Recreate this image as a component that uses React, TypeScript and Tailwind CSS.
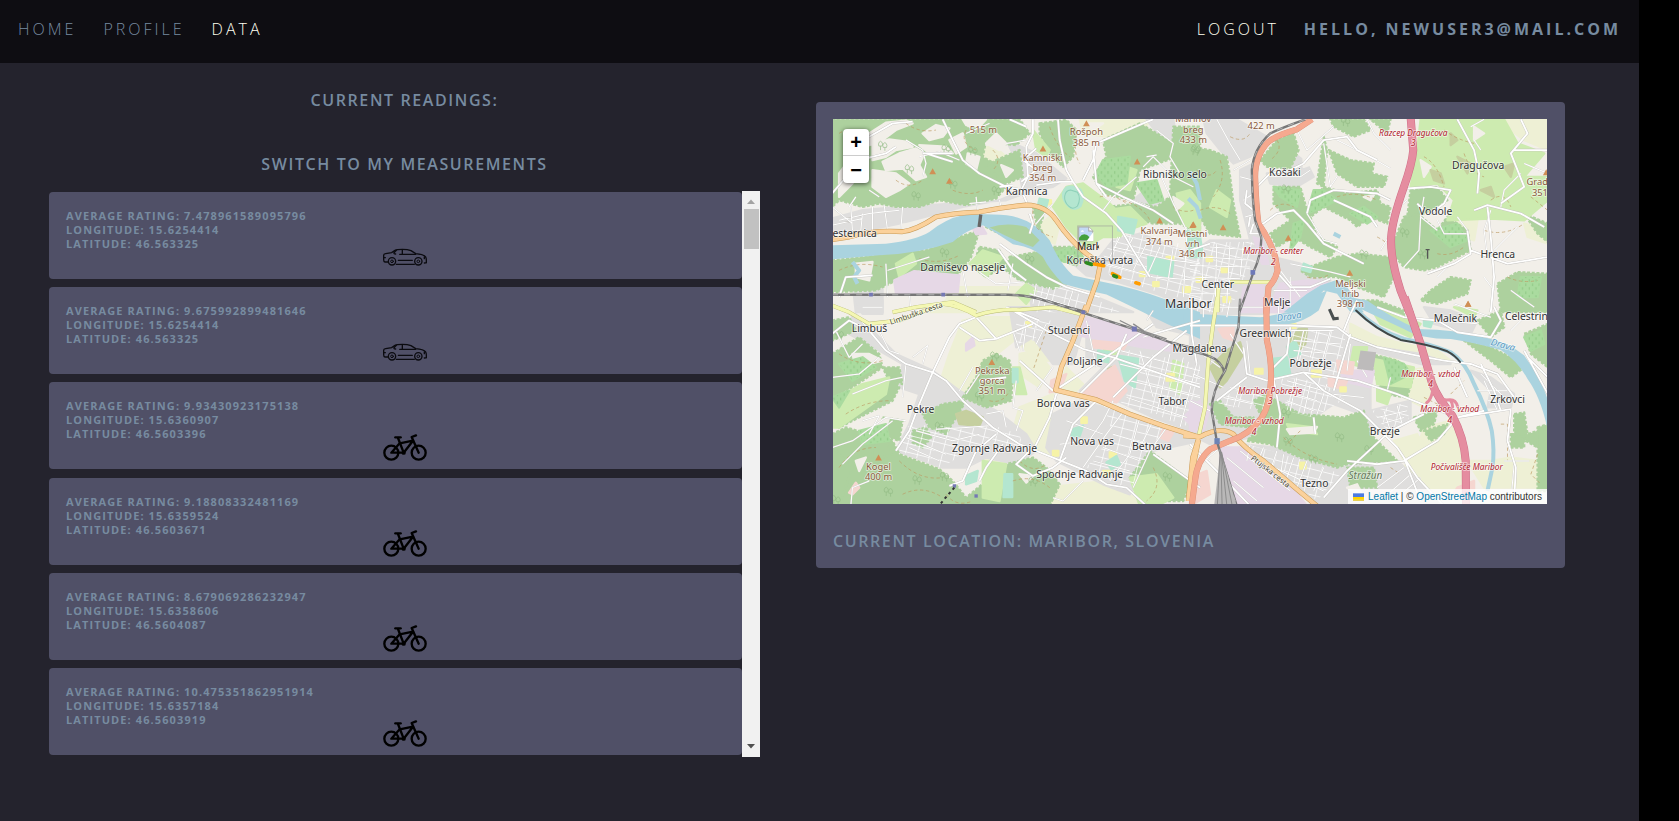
import React from "react";

type Vehicle = "car" | "bike";

interface Reading {
  rating: string;
  longitude: string;
  latitude: string;
  vehicle: Vehicle;
}

const readings: Reading[] = [
  { rating: "7.478961589095796", longitude: "15.6254414", latitude: "46.563325", vehicle: "car" },
  { rating: "9.675992899481646", longitude: "15.6254414", latitude: "46.563325", vehicle: "car" },
  { rating: "9.93430923175138", longitude: "15.6360907", latitude: "46.5603396", vehicle: "bike" },
  { rating: "9.18808332481169", longitude: "15.6359524", latitude: "46.5603671", vehicle: "bike" },
  { rating: "8.679069286232947", longitude: "15.6358606", latitude: "46.5604087", vehicle: "bike" },
  { rating: "10.475351862951914", longitude: "15.6357184", latitude: "46.5603919", vehicle: "bike" },
];

function CarIcon() {
  return (
    <svg viewBox="0 0 132 81" className="h-[27px] w-11" fill="none" stroke="#0b0b10" strokeWidth="4" strokeLinecap="round" role="img" aria-label="Car">
      <g transform="translate(0 -12)">
        <path d="M14 66 H6 Q2 65 2 59 V46 Q2 42 8 41 L26 38 L36 31 Q42 28 58 28 Q74 28 84 32 L98 41 Q122 43 128 51 Q130 55 130 60 V68 L124 69" />
        <path d="M40 73 H94" />
        <path d="M46 61 H88" />
        <path d="M50 43 H98" />
        <path d="M58 29 V42 M40 31 L33 38 Q32 42 38 42" />
        <path d="M2 53 H7 M124 51 V56" />
        <circle cx="27" cy="64" r="11" />
        <circle cx="27" cy="64" r="4" strokeWidth="3" />
        <circle cx="106" cy="64" r="11" />
        <circle cx="106" cy="64" r="4" strokeWidth="3" />
      </g>
    </svg>
  );
}

function BikeIcon() {
  return (
    <svg viewBox="0 0 132 81" className="h-[27px] w-11" fill="none" stroke="#000" strokeWidth="7" strokeLinecap="round" strokeLinejoin="round" role="img" aria-label="Bicycle">
      <circle cx="25" cy="56" r="21" />
      <circle cx="107" cy="56" r="21" />
      <path d="M25 56 L50 28 L90 20 L62 56 Z" />
      <path d="M45 12 L62 56" />
      <path d="M37 10 H53" />
      <path d="M99 4 L86 9 L107 56" />
      <circle cx="62" cy="56" r="3" />
    </svg>
  );
}

interface Label {
  t: string;
  x: number;
  y: number;
  kind: "place" | "city" | "peak" | "exit" | "water" | "road" | "wood";
  r?: number;
  a?: "start" | "end";
}

interface Tile {
  dx: number;
  dy: number;
  farm?: string;
  town?: string;
  townSlant?: string;
  industry?: string;
  retail?: string;
  forest?: string;
  clearing?: string;
  orchard?: string;
  scrub?: string;
  school?: string;
  grass?: string;
  pitch?: string;
  contours?: string;
  waterArea?: string;
  waterLine?: string;
  river?: string;
  island?: string;
  lanes?: string;
  streets?: string;
  secondary?: string;
  primary?: string;
  trunk?: string;
  motorway?: string;
  rail?: string;
  trees: [number, number][];
  peaks: [number, number][];
  labels: Label[];
}

const tiles: Tile[] = [
  {
    dx: -39,
    dy: -87,
    farm: "M480 180 L520 165 L560 200 L560 250 L510 240Z M690 380 L720 400 L705 460 L670 440 L665 400Z M780 88 H1000 L960 120 L860 140 L790 130Z M400 590 H640 L650 665 H330 L380 630Z",
    town: "M180 360 L330 345 L480 335 L560 330 L640 300 L700 290 L740 265 L650 190 L560 150 L590 210 L610 300 L540 330 L430 350 L260 395 L39 420 V400Z M39 385 L130 360 L240 350 L240 400 L140 420 L39 430Z M940 330 L1000 280 L1030 330 L1000 350Z M840 500 L880 450 L960 430 L1060 470 L1140 500 V665 L1010 610 L880 570 L800 555 L760 520Z M620 570 L720 580 L830 620 L940 665 H640Z M100 575 L190 575 L190 665 H110Z M980 88 H1060 L1070 150 L1020 140Z",
    townSlant: "M850 490 L890 440 L960 425 L1080 460 L1140 480 V640 L1000 600 L870 560Z M640 590 L720 590 L860 640 L900 665 H650Z M900 420 L960 430 L930 470Z",
    industry: "M225 570 L285 542 L420 555 L415 605 L230 608Z M455 405 L485 405 L500 430 L470 432Z",
    school: "M1040 500 h20 v12 h-20Z M1000 575 h16 v12 h-16Z M1090 590 h20 v14 h-20Z M960 545 h14 v12 h-14Z M680 330 h14 v12 h-14Z",
    forest: "M39 88 H430 L450 120 L500 150 L490 200 L540 230 L560 290 L530 325 L440 345 L360 330 L300 350 L230 350 L180 340 L130 350 L60 330 L39 350Z M440 88 H600 L630 130 L590 165 L530 160 L480 140Z M530 210 L600 180 L610 260 L560 280 L500 230Z M660 100 L740 90 L770 120 L760 200 L730 230 L690 190 L660 130Z M850 150 L960 100 L1060 160 L1070 200 L960 240 L940 330 L850 310 L820 260 L860 200Z M1060 110 H1140 V430 L1080 400 L1000 400 L900 370 L860 350 L960 340 L1010 350 L1050 320Z M640 350 L680 350 L660 410 L690 470 L760 470 L790 490 L770 525 L720 510 L660 440Z M39 510 L130 500 L230 485 L320 480 L420 440 L480 420 L455 500 L410 560 L340 545 L290 540 L230 570 L170 600 L39 605Z M500 410 L540 390 L600 395 L640 440 L620 465 L560 440Z M570 500 L680 480 L700 530 L740 580 L700 595 L600 570 L560 540Z M480 470 L540 480 L560 520 L500 560 L460 530Z",
    clearing: "M150 130 L200 98 L260 92 L280 100 L230 120 L190 150 L150 165Z M160 165 L210 148 L260 155 L280 170 L230 180 L200 200 L160 210Z M190 215 L240 190 L290 175 L315 190 L300 225 L320 260 L290 270 L250 235 L200 240Z M160 240 L230 250 L270 280 L240 300 L200 320 L160 290Z M310 130 L350 105 L390 115 L370 140 L330 150Z M60 250 L90 210 L130 230 L100 280 L60 320Z M300 165 L380 170 L400 190 L330 190Z M390 150 L430 130 L440 170 L410 190Z M445 190 L480 200 L470 240 L440 220Z M430 88 L500 88 L480 110 L440 105Z M500 160 L530 130 L560 160 L540 180Z M545 225 L580 240 L560 260Z M590 430 L625 420 L620 450Z M800 100 L850 100 L820 120Z M110 520 L160 515 L150 570 L110 560Z M1060 320 L1090 340 L1070 360Z",
    orchard: "M850 210 L930 200 L920 280 L860 290 L830 250Z M700 490 L750 470 L790 500 L760 520 L720 510Z M950 280 L1010 270 L1030 330 L990 340Z",
    grass: "M740 290 L790 280 L870 340 L930 400 L900 440 L850 440 L800 470 L740 410 L700 350Z M860 360 L930 350 L980 400 L920 420Z M450 520 L490 480 L550 500 L500 560Z M640 120 L690 180 L680 200 L650 180Z M590 610 L620 580 L650 600 L620 640Z M230 520 L280 490 L290 520 L240 560Z M890 220 L950 240 L930 300 L890 290Z M1070 310 L1110 300 L1140 340 V430 L1090 400Z",
    pitch: "M730 310 q5 -25 30 -20 l22 8 q14 22 0 50 q-18 16 -35 0 q-18 -18 -17 -38Z M895 380 L950 390 L940 430 L895 420Z M985 500 L1060 515 L1055 560 L985 545Z M660 325 l25 5 l-5 20 l-25 -5Z",
    contours: "M120 140 q40 40 20 80 M260 100 q40 30 90 20 M440 120 q-20 40 30 60 M520 180 q30 30 0 60 M690 110 q20 60 60 90 M840 320 q40 -10 80 20 M910 330 q60 20 80 60 M60 540 q60 -30 130 -10 M300 505 q60 20 120 -10 M640 360 q-10 60 60 80 M770 130 q-10 60 10 90 M400 300 q50 20 90 0 M1060 350 q30 20 60 10 M60 130 q30 -20 60 0 M230 270 q40 30 80 0",
    river: "M39 465 L200 460 Q290 450 330 425 Q380 385 430 375 Q520 368 580 378 Q650 395 690 450 Q720 520 760 555 Q830 570 900 585 Q1000 610 1070 640 L1140 665 V745 L1040 700 Q930 645 860 612 Q780 595 730 580 Q690 540 670 500 Q640 470 580 462 Q520 420 490 405 Q440 420 400 455 Q300 490 180 495 L39 507Z",
    island: "M510 412 Q560 395 620 410 L660 450 L640 470 Q580 450 510 412Z",
    waterLine: "M100 515 L120 540 L105 560 L115 580 M1105 325 L1130 350 L1142 385",
    lanes: "M95 350 L100 420 M110 320 L90 350 M130 370 L125 420 M160 350 V420 M195 345 L205 420 M250 350 L245 415 M60 390 L150 370 L240 360 M39 405 L130 385 M39 350 L100 400 M310 260 L320 220 L310 180 L260 150 M150 300 L180 320 M300 200 L360 185 L420 210 M440 130 L510 100 M470 320 L475 370 M450 340 L500 335 M540 330 L545 350 M430 540 L445 620 M480 545 L530 580 L610 575 M580 520 L565 600 M200 520 L205 620 M205 540 L330 500 M270 610 L275 660 M630 610 L760 650 M650 580 L640 640 M690 590 L670 660 M760 600 L740 660 M1010 120 L1060 160 L1050 200 L1080 250 M970 230 L1000 200 L1060 260 L1120 290 M940 330 L990 350 M850 360 L880 320 L950 260 M560 160 L620 150 M700 340 L650 400 M900 440 L870 500 M940 440 L900 520 M980 460 L940 540 M1020 470 L980 560 M1060 470 L1040 600 M880 470 L1060 510 L1140 520 M860 520 L1000 560 L1140 570 M1100 440 L1090 620 M980 200 L1010 195 M1020 250 L1060 340 L1100 420",
    streets: "M640 88 L640 130 L620 170 L625 260 L605 300 L625 345 M370 88 L400 150 L430 210 L480 250 L560 290 L610 300 M570 88 L620 110 M605 275 L650 240 L610 210 L650 175 M650 285 L720 275 L760 275 L790 320 L860 370 L905 420 L940 480 L990 560 M715 88 L720 150 L740 240 L760 275 M790 270 L820 210 L830 160 L970 100 L1000 88 M820 180 L830 280 L860 320 M540 460 L620 520 L680 560 L740 590 L840 620 M535 475 L580 540 L620 570 M630 370 L640 400 L630 430 M310 190 L400 190 M320 190 L400 215 M39 310 L90 250 L120 210 L200 190 L230 170 M150 140 L220 100 L280 95 M540 290 L580 285 M60 620 L80 560 L160 555 M830 280 L910 320 L1000 360 L1060 400",
    secondary: "M220 665 L290 650 L400 635 L470 665",
    primary: "M39 448 L90 440 Q160 418 250 424 Q290 420 350 380 Q400 368 480 365 Q560 350 620 344 Q680 345 710 390 Q750 450 800 490 L842 520 L832 570 L798 665",
    rail: "M39 613 H560 Q620 612 680 632 L800 665",
    trees: [[190, 170], [290, 320], [380, 180], [460, 185], [400, 285], [530, 305], [375, 490], [630, 510], [270, 240], [1125, 185]],
    peaks: [[340, 243], [390, 272], [670, 175], [800, 100], [952, 214], [1019, 391], [1118, 404]],
    labels: [
      { t: "515 m", x: 492, y: 128, kind: "peak" },
      { t: "Rošpoh", x: 800, y: 136, kind: "peak" },
      { t: "385 m", x: 800, y: 167, kind: "peak" },
      { t: "Kamniški", x: 669, y: 212, kind: "peak" },
      { t: "breg", x: 669, y: 243, kind: "peak" },
      { t: "354 m", x: 669, y: 274, kind: "peak" },
      { t: "Marinov", x: 1120, y: 97, kind: "peak" },
      { t: "breg", x: 1120, y: 128, kind: "peak" },
      { t: "433 m", x: 1120, y: 159, kind: "peak" },
      { t: "Kalvarija", x: 1018, y: 432, kind: "peak" },
      { t: "374 m", x: 1018, y: 463, kind: "peak" },
      { t: "Mestni", x: 1117, y: 440, kind: "peak" },
      { t: "vrh", x: 1117, y: 470, kind: "peak" },
      { t: "348 m", x: 1117, y: 501, kind: "peak" },
      { t: "Kamnica", x: 621, y: 313, kind: "place" },
      { t: "esternica", x: 40, y: 440, kind: "place", a: "start" },
      { t: "Damiševo naselje", x: 430, y: 542, kind: "place" },
      { t: "Koroška vrata", x: 840, y: 522, kind: "place" },
      { t: "Ribniško selo", x: 1065, y: 265, kind: "place" },
      { t: "Maribor", x: 1105, y: 654, kind: "city" },
    ],
  },
  {
    dx: 1071,
    dy: -87,
    farm: "M940 88 H1071 V180 L1000 150 L960 120Z M780 380 L860 390 L850 450 L800 430Z M1000 400 L1071 420 V460 L1010 440Z",
    town: "M40 88 H140 L230 140 L180 200 L130 220 L90 180 L50 130Z M150 240 L190 220 L200 400 L250 470 L280 550 L420 570 L330 640 L300 665 H0 V490 L60 450 L180 450 L150 330Z M300 180 L350 220 L370 260 L320 290 L240 280 L230 250 L300 240Z M250 500 L330 520 L400 560 L280 560Z",
    townSlant: "M60 455 L190 455 L205 500 L150 580 L120 665 H0 V500Z",
    industry: "M270 580 L350 570 L410 575 L330 640 L300 665 H230Z M160 590 L220 580 L215 665 H150Z M190 440 L215 450 L235 520 L215 520Z",
    school: "M20 560 h18 v14 h-18Z M50 500 h16 v12 h-16Z M100 620 h20 v14 h-20Z M95 535 h16 v10 h-16Z",
    forest: "M0 170 L60 180 L110 200 L120 260 L130 340 L150 440 L60 430 L30 380 L0 320Z M210 210 L260 150 L310 130 L325 180 L300 235 L230 230Z M420 88 H520 L540 120 L490 140 L430 110Z M415 180 L480 210 L550 220 L545 250 L590 260 L580 290 L500 290 L440 250Z M400 140 L410 180 L400 290 L380 280Z M250 290 L330 290 L350 360 L400 290 L470 310 L560 300 L570 340 L600 350 L590 400 L540 380 L500 410 L480 390 L400 350 L360 380 L380 440 L440 470 L420 500 L360 470 L310 440 L260 470 L240 430 L300 390 L250 340Z M440 500 L500 490 L600 500 L610 560 L580 620 L500 590 L440 560 L360 560 L330 540Z M640 380 L680 370 L740 420 L770 380 L830 420 L840 480 L740 530 L700 540 L640 530 L600 480Z M660 300 L740 290 L770 330 L700 370 L650 380Z M720 600 L780 560 L840 570 L830 610 L740 640 L690 630Z M920 580 L980 545 L1071 550 V665 H930Z M1000 370 L1071 400 V455 L1040 430Z M540 88 L600 88 L590 130Z",
    orchard: "M250 290 L330 300 L320 350 L270 320Z M370 300 L400 300 L440 330 L400 350 L350 370Z M310 400 L340 390 L330 440 L300 480Z M480 370 L520 350 L560 380 L530 400Z M720 420 L800 400 L830 450 L780 470Z M990 560 L1050 560 L1040 620 L980 620Z",
    scrub: "M720 240 L750 250 L760 280 L730 270Z M800 200 L840 220 L830 250Z M940 230 L970 220 L960 260Z M870 300 L900 290 L910 320Z M780 130 L800 150 L780 165Z",
    grass: "M690 88 H940 L980 160 L1060 190 L1000 260 L1071 260 V330 L1000 390 L900 385 L770 390 L790 330 L740 280 L660 290 L680 180Z M80 300 L120 330 L110 380 L60 350Z",
    clearing: "M340 150 L400 120 L370 220 L340 230Z M430 120 L470 160 L440 170Z M690 210 L720 230 L700 260Z M850 110 L880 130 L850 150Z M520 320 L550 315 L540 330Z M430 570 L460 590 L440 610Z",
    pitch: "M-10 420 L30 440 L40 500 L0 500Z M340 520 L365 530 L360 545 L335 538Z",
    contours: "M20 240 q40 30 60 0 M90 210 q20 60 -20 110 M30 360 q50 -20 90 10 M120 140 q40 20 60 -10 M240 360 q30 -30 70 -10 M260 150 q20 30 -20 60 M700 200 q40 20 60 90 M820 190 q20 60 60 70 M760 120 q40 30 90 40 M900 330 q40 -30 60 20 M880 420 q60 20 120 -20 M440 320 q60 -20 120 10 M560 440 q40 20 50 50 M740 490 q40 10 80 -20 M350 560 q40 10 70 -10 M950 560 q40 20 90 10 M1020 320 l50 40",
    waterArea: "M280 665 L350 610 L390 585 L440 568 L470 590 L520 665 H480 L440 610 L400 600 L340 665Z",
    waterLine: "M0 245 L20 280 L30 330 M430 430 l20 10",
    lanes: "M80 88 L120 160 L150 210 M130 240 L180 210 M150 260 L190 270 M160 330 L190 310 M165 380 L200 370 M240 260 L330 260 L360 240 M320 120 L350 180 L430 110 M440 150 L520 190 L600 235 M530 88 L550 130 L600 180 M60 470 L200 480 M40 500 L190 510 M0 525 L180 530 M0 560 L150 565 M40 480 L35 650 M80 460 L75 660 M120 455 L110 640 M160 455 L150 560 M0 610 H120 M300 520 L420 545 L480 560 M270 540 L330 620 M300 560 L300 650 M250 600 H350 M350 370 L400 450 L440 460 M400 160 L420 290 L440 260 M700 320 L690 380 L740 420 M650 330 L600 370 M690 380 L685 480 L640 530 M740 390 L760 430 L830 430 M800 380 L830 420 M900 360 L880 420 L890 500 M910 480 L980 410 M880 88 L840 110 M850 150 L870 180 M930 350 L940 300 L990 250 M1071 250 L1000 220 M960 600 L1030 650 M880 560 L910 600 M780 520 L740 560 M600 430 L570 480",
    streets: "M200 290 L240 250 L300 240 L340 220 L400 150 L470 140 L500 180 L560 210 M205 410 L260 370 L310 360 L350 400 L400 460 L480 500 L520 520 M350 370 L360 330 L430 300 L560 310 L600 330 M430 330 L540 380 L560 410 M650 295 L720 290 L780 300 L760 340 L720 370 M800 88 L850 180 L865 250 L860 310 M850 360 L890 345 L990 370 L1060 410 M890 350 L900 440 L910 560 L900 665 M710 550 L790 520 L840 490 L830 420 M190 400 L180 430 L210 430 M990 88 L1010 130 L960 190 L1000 290 L930 340 M970 180 H1071 M260 545 L300 590 L360 590 L420 565 M840 480 L950 520 L1071 500 M0 480 L60 460 M680 340 L700 360 M170 300 L165 340 L190 360 M180 380 L175 410",
    secondary: "M120 575 H240 M85 590 L82 665",
    trunk: "M365 88 L320 118 Q260 135 235 155 Q195 195 195 260 Q198 350 205 400 Q240 450 255 500 L262 540 Q255 570 235 590 L228 670",
    motorway: "M660 80 L668 180 Q665 220 640 290 Q605 390 602 440 Q598 500 630 600 L658 670",
    rail: "M345 88 Q270 115 240 130 Q190 175 185 240 Q187 340 195 390 L213 440 Q215 490 190 545 L148 665",
    trees: [[287, 300], [18, 180], [642, 430], [695, 495], [520, 495], [465, 98]],
    peaks: [[10, 402], [99, 411], [294, 442], [478, 547], [832, 640], [1066, 246]],
    labels: [
      { t: "422 m", x: 213, y: 118, kind: "peak" },
      { t: "Košaki", x: 284, y: 259, kind: "place" },
      { t: "Dragučova", x: 862, y: 238, kind: "place" },
      { t: "Vodole", x: 735, y: 374, kind: "place" },
      { t: "Hrenca", x: 921, y: 502, kind: "place" },
      { t: "Center", x: 83, y: 594, kind: "place" },
      { t: "Melje", x: 261, y: 646, kind: "place" },
      { t: "Grad", x: 1071, y: 285, kind: "peak", a: "end" },
      { t: "351", x: 1071, y: 316, kind: "peak", a: "end" },
      { t: "Meljski", x: 480, y: 589, kind: "peak" },
      { t: "hrib", x: 480, y: 619, kind: "peak" },
      { t: "398 m", x: 480, y: 650, kind: "peak" },
      { t: "Razcep Dragučova", x: 668, y: 138, kind: "exit" },
      { t: "3", x: 668, y: 168, kind: "exit" },
      { t: "Maribor - center", x: 249, y: 492, kind: "exit" },
      { t: "2", x: 249, y: 523, kind: "exit" },
    ],
  },
  {
    dx: -39,
    dy: 543,
    farm: "M390 160 L430 60 L480 50 L600 50 L620 90 L520 170 L500 270 L400 310 L350 310 L360 250Z M600 160 L650 150 L690 200 L660 260 L600 220Z M600 320 L700 280 L690 340 L760 340 L700 470 L640 440 L580 390Z M740 200 L790 250 L760 280 L725 260Z M680 560 L860 540 L960 600 V615 H690Z M60 500 L180 460 L140 540 L100 615 H60Z M490 480 L560 460 L540 600 L500 590Z M590 120 L640 100 L700 180 L650 180Z",
    town: "M100 40 L160 90 L230 160 L340 210 L420 270 L530 330 L620 400 L650 450 L590 490 L500 470 L440 500 L370 500 L230 450 L270 370 L300 280 L240 260 L250 190 L180 150 L90 100Z M570 20 L690 20 L800 50 L760 190 L700 190 L640 110 L590 140Z M800 100 L1140 150 V400 L1000 350 L870 290 L780 270 L850 200 L800 180Z M700 340 L780 300 L960 350 L1140 420 L1000 450 L930 580 L850 550 L710 480 L680 440Z M110 0 H190 V40 H130Z M960 0 L1140 60 V110 L1010 80Z",
    townSlant: "M270 370 L420 380 L510 370 L600 400 L610 440 L540 440 L460 430 L400 480 L360 500 L240 450Z M880 140 L1140 190 V390 L1000 340 L900 310 L950 240Z M850 310 L960 350 L1060 390 L990 450 L930 570 L800 500 L880 400Z M590 60 L700 60 L640 120 L590 130Z",
    industry: "M800 50 L900 75 L1060 130 L1050 150 L970 140 L780 105Z M440 130 L460 110 L465 135 L440 150Z M1090 350 L1140 300 V400Z",
    retail: "M780 285 L820 240 L885 195 L920 270 L890 305 L830 295Z M820 120 L920 130 L910 150 L820 140Z M695 240 L740 220 L720 270 L690 275Z M1030 385 L1060 395 L1045 420 L1020 410Z M90 575 L110 545 L120 560 L100 580Z",
    school: "M785 350 h16 v16 h-16Z M620 65 h14 v12 h-14Z M870 455 h18 v14 h-18Z M1040 220 h22 v20 h-22Z M850 510 h20 v14 h-20Z M700 450 h16 v14 h-16Z",
    forest: "M39 60 L90 50 L110 90 L39 120Z M39 160 L120 110 L180 160 L190 200 L100 260 L39 290Z M100 290 L220 230 L240 260 L220 300 L60 380 L39 350Z M190 200 L240 200 L250 250 L210 240Z M430 290 L470 230 L490 180 L530 160 L570 180 L580 230 L575 300 L500 320Z M310 340 L370 310 L440 300 L410 350 L380 400 L330 380Z M280 390 L320 380 L335 410 L310 440 L280 425Z M39 400 L80 380 L220 420 L240 460 L360 505 L400 540 L440 590 L560 490 L640 470 L680 500 L720 550 L690 615 H39Z M930 530 L990 450 L1110 540 L1090 600 L980 600Z M160 430 L200 420 L220 460 L160 480Z M39 440 L100 500 L60 615 H39Z M190 350 L250 360 L240 420 L180 400Z",
    clearing: "M100 160 L150 160 L190 180 L110 200Z M180 360 L210 350 L200 380 L150 390Z M110 480 L140 470 L120 510Z M600 520 L640 525 L620 545Z",
    orchard: "M60 190 L130 170 L170 200 L100 240Z M120 390 L200 370 L210 420 L130 430Z M39 290 L90 270 L60 320Z",
    scrub: "M410 340 L440 330 L490 350 L480 375 L420 370Z M865 205 l12 -6 l10 30 l-12 6Z",
    grass: "M39 300 L130 250 L210 230 L200 280 L60 380 L39 380Z M860 120 L900 130 L890 160 L850 160Z M490 480 L560 490 L540 600 L490 590Z M930 530 L1010 520 L1060 590 L1010 615 H960Z M580 200 L600 200 L620 280 L590 280Z M1060 180 L1090 190 L1080 280 L1050 260Z",
    pitch: "M835 150 L870 155 L865 185 L835 178Z M895 165 L955 175 L945 260 L915 240Z M555 520 H578 V588 H552Z M440 525 L475 510 L470 540 L440 550Z M760 385 L790 375 L780 405 L755 405Z M580 205 h14 v40 h-14Z M860 485 l30 -20 l10 25 l-25 15Z",
    contours: "M60 160 q60 40 130 20 M80 340 q60 -40 130 -40 M450 260 q40 -60 110 -40 M510 300 q40 10 60 -30 M60 500 q40 -60 110 -60 M240 480 q60 60 130 50 M250 580 q60 -30 120 10 M580 540 q60 -20 110 20 M600 480 q40 40 80 10 M1000 500 q30 60 -20 100 M680 90 l-40 120 M380 580 q30 40 80 20",
    lanes: "M50 90 L90 170 L130 130 M110 40 L150 90 M130 20 L190 20 M180 90 L210 150 L240 160 M260 190 L250 290 M280 170 L325 135 L310 190 M40 230 L120 220 L180 170 M100 280 L200 240 L250 230 M39 440 L100 420 L200 350 L260 360 M70 490 L130 430 L220 360 M150 400 L180 345 L130 360 M270 440 L360 480 M260 410 L380 460 M290 390 L400 420 L480 400 M350 385 L440 380 L510 375 M500 340 L550 330 L560 380 M440 280 L480 220 M420 270 L460 200 M580 90 L600 150 M620 70 L610 150 M650 60 L640 120 M680 70 L650 130 M590 240 L580 320 L610 330 L590 390 M650 270 L700 200 M800 60 L830 200 M880 300 L850 360 L800 430 M920 320 L860 400 L790 500 M960 350 L930 460 L870 540 M1000 360 L960 440 M1040 380 L990 450 L940 560 M880 400 L980 430 M850 440 L960 480 M820 480 L930 510 M900 150 L1140 210 M900 190 L1140 250 M930 240 L1140 290 M920 290 L1100 350 M960 150 L1000 290 M1050 160 L1010 340 M1090 170 L1050 360 M1130 190 L1080 380 M740 360 L850 400 M720 430 L800 420 M95 615 L100 560 L150 540 M700 590 L730 600 L790 540 M970 110 L1060 80 M1000 30 L980 60",
    streets: "M39 100 L90 60 L150 90 L200 150 L260 190 L340 215 L380 240 L430 300 L520 380 L600 430 L700 470 L800 510 L860 550 L920 560 L980 615 M470 50 L420 70 L390 110 L340 215 L300 310 L270 390 L230 450 M470 50 L530 115 L480 120 L420 80 M530 115 L640 70 M580 30 L680 90 L790 145 L880 170 M710 280 L690 350 L640 450 M830 300 L760 370 L720 480 M720 260 L880 155 L1000 70 M780 280 L890 170 L920 100 M1115 0 L1115 100 L1130 190 M1100 90 L1000 170 L880 290 M640 440 L590 490 L640 525 L700 500 L740 470 M530 400 L470 450 L430 540 L390 555 M550 430 L500 500 L480 540 M600 180 L700 270 M1000 100 L1140 60 M1000 460 L1140 560 M880 170 L1140 260 M560 20 L660 60 M560 230 L480 240",
    secondary: "M39 15 L90 35 L150 70 L240 60 L370 10 Q420 15 470 45 Q530 25 600 28 L700 20 L790 42",
    primary: "M800 15 L790 40 L760 120 L725 200 L708 268 L830 297 L930 340 L1030 375 L1140 410 M1135 415 L1118 470 L1105 600",
    rail: "M680 0 L800 40 L940 85 L1050 125 L1140 148",
    trees: [[60, 105], [293, 540], [207, 575], [375, 530], [360, 380], [480, 290], [525, 170], [640, 545], [1042, 530], [50, 600]],
    peaks: [[517, 184], [178, 470]],
    labels: [
      { t: "Limbuš", x: 151, y: 95, kind: "place" },
      { t: "Studenci", x: 748, y: 100, kind: "place" },
      { t: "Poljane", x: 795, y: 192, kind: "place" },
      { t: "Borova vas", x: 731, y: 320, kind: "place" },
      { t: "Pekre", x: 304, y: 336, kind: "place" },
      { t: "Nova vas", x: 817, y: 433, kind: "place" },
      { t: "Betnava", x: 996, y: 448, kind: "place" },
      { t: "Tabor", x: 1057, y: 313, kind: "place" },
      { t: "Zgornje Radvanje", x: 525, y: 452, kind: "place" },
      { t: "Spodnje Radvanje", x: 780, y: 530, kind: "place" },
      { t: "Magdalena", x: 1139, y: 153, kind: "place" },
      { t: "Pekrska", x: 518, y: 219, kind: "peak" },
      { t: "gorca", x: 518, y: 250, kind: "peak" },
      { t: "351 m", x: 518, y: 281, kind: "peak" },
      { t: "Kogel", x: 178, y: 507, kind: "peak" },
      { t: "400 m", x: 178, y: 537, kind: "peak" },
      { t: "Limbuška cesta", x: 293, y: 46, kind: "road", r: -19 },
    ],
  },
  {
    dx: 1071,
    dy: 543,
    farm: "M640 210 L720 200 L740 260 L700 320 L640 290Z M700 380 L780 360 L820 450 L820 560 L700 600 L640 500 L680 440Z M610 420 L680 400 L700 440 L640 480Z M830 480 L900 480 L960 470 L1040 480 L1040 560 H880Z M480 70 L560 110 L640 130 L740 150 L780 180 L690 180 L560 150 L480 110Z M420 270 L540 300 L530 330 L450 310Z M600 160 L640 200 L600 220Z",
    town: "M0 80 L220 70 L440 80 L480 110 L450 200 L540 240 L540 350 L430 310 L370 350 L280 340 L240 290 L230 400 L130 420 L60 430 L0 400Z M440 80 L480 110 L560 140 L690 160 L780 190 L690 190 L540 150 L460 200Z M540 330 L660 300 L660 360 L590 400 L530 380Z M150 430 L260 440 L460 500 L450 615 H380 L280 520Z M840 210 L900 230 L970 280 L960 320 L890 320 L900 270Z M450 500 L520 480 L620 480 L740 590 V615 H440Z M700 20 L780 30 L860 60 L840 100 L730 70Z M0 0 H220 V40 H0Z",
    townSlant: "M300 90 L470 90 L440 220 L400 280 L340 210 L300 180Z M270 230 L380 240 L470 290 L370 350 L290 330Z M130 270 L230 260 L220 330 L80 310Z M545 330 L650 305 L655 355 L590 390Z M170 430 L380 490 L450 520 L380 600 L270 510Z",
    industry: "M90 440 L150 440 L290 540 L350 615 H130 L90 500Z M460 210 L550 210 L540 260 L450 240Z M0 300 L60 320 L40 390 L0 390Z M160 10 H300 L360 0 L330 40 L230 30Z",
    retail: "M0 530 L50 510 L60 580 L0 615Z M440 180 L490 185 L485 220 L445 215Z M415 225 L470 240 L460 265 L415 255Z M85 85 L130 80 L130 120 L100 110Z M800 560 L850 540 L850 575 H790Z",
    school: "M365 210 h26 v18 h-26Z M195 205 h22 v14 h-22Z M330 485 h16 v18 h-16Z M450 260 h16 v12 h-16Z M300 70 h16 v12 h-16Z",
    forest: "M230 340 L260 300 L330 340 L460 350 L520 330 L540 400 L620 480 L470 490 L440 500 L330 470 L240 430 L170 420 L210 380Z M540 160 L620 180 L670 220 L650 290 L580 280 L560 240Z M500 0 H560 L640 30 L640 50 L560 40Z M670 350 L740 330 L730 370 L690 390Z M700 390 L770 370 L760 400 L720 420Z M820 120 L900 140 L960 170 L1000 200 L960 230 L900 180Z M860 60 L930 30 L940 80 L900 110Z M1040 380 L1071 370 V570 H1040Z M970 340 L1000 335 L1010 400 L1040 390 L1040 440 L970 400Z M960 400 L1000 400 L1000 440 L960 440Z M470 500 L550 500 L560 560 L480 560Z M60 310 L90 300 L130 350 L190 350 L180 380 L90 370Z M190 300 L230 280 L300 330 L230 380Z M1000 100 L1071 70 V200 L1020 160Z",
    orchard: "M580 170 L640 190 L660 220 L600 250Z M1000 110 L1050 90 L1060 130 L1020 150Z",
    scrub: "M60 200 L110 150 L150 125 L160 160 L110 240 L90 260Z M325 85 L350 85 L345 130 L315 160 L300 120Z",
    grass: "M490 140 L530 140 L520 200 L480 190Z M550 175 L670 200 L660 260 L560 250Z M290 370 L370 380 L380 400 L300 390Z M540 20 L620 40 L690 70 L660 110 L570 70Z M560 260 L600 280 L590 310 L560 300Z M790 20 L860 30 L850 50Z",
    clearing: "M290 385 L380 378 L370 395 L300 400Z M470 560 L500 550 L520 590Z",
    pitch: "M290 140 L315 120 L330 160 L300 170Z M245 175 L290 170 L300 220 L255 230Z M700 60 L725 65 L720 80 L700 75Z",
    contours: "M280 410 q60 60 160 80 M330 390 l-40 40 M700 290 l80 40 M780 280 l40 -40 M930 370 h20 v110 M1040 460 l-20 60 l30 30 M600 500 l30 20",
    river: "M-20 38 L210 50 Q290 40 335 22 Q355 8 362 -10 L410 -30 L385 30 Q340 65 290 72 L180 74 L-20 74Z M480 -10 L530 0 Q600 50 680 85 Q800 85 900 115 Q960 130 1000 165 Q1055 240 1071 300 V390 Q1050 290 1010 235 Q980 180 930 148 Q850 125 780 115 Q690 115 640 85 L500 20Z",
    waterLine: "M495 25 Q560 90 640 115 Q720 130 780 155 Q825 185 850 250 Q890 330 903 390 Q912 450 905 500 L890 570",
    lanes: "M170 120 L180 220 M120 100 L160 160 M300 90 L430 90 M310 120 L450 130 M310 150 L440 160 M380 90 L360 170 M420 90 L390 200 M340 90 L320 180 M290 240 L400 270 M280 270 L380 300 M290 300 L370 330 M320 230 L300 330 M360 250 L340 340 M410 250 L380 340 M480 130 L470 210 M500 180 L530 230 M420 280 L520 290 M120 260 L200 280 M100 290 L190 310 M150 250 L130 320 M560 350 L650 330 M570 370 L640 350 M580 330 L600 390 M620 315 L635 370 M180 430 L170 480 M220 440 L200 490 M260 450 L240 510 M310 470 L290 530 M350 480 L320 560 M400 500 L370 570 M280 460 L270 530 M190 470 L400 570 M110 470 L220 560 M150 450 L300 570 M130 540 L200 600 M560 560 L640 500 M580 590 L660 520 M620 590 L690 530 M870 220 L940 290 M880 240 L920 330 M860 270 L950 270 M890 300 L960 300 M790 10 L900 50 M940 480 H1015 M960 600 L970 490 M0 440 L60 480 M20 500 L90 440 M600 230 L590 270 M740 60 L860 70 M1000 50 L960 90 M0 20 H220 M40 0 V50 M120 0 L110 50 M265 0 V40 M20 150 L90 200 M10 220 L100 260 M0 300 L60 330",
    streets: "M0 75 L300 75 L440 80 L480 110 L560 140 L680 165 L760 180 M480 100 L430 270 M160 140 L170 220 L230 240 L340 215 L500 240 L620 280 L720 320 L800 350 L960 325 M340 215 L400 270 L510 330 L560 380 L620 440 L680 530 L760 615 M960 325 L950 420 L975 500 L970 600 M800 350 L740 420 L640 480 L560 490 L470 480 M700 340 L600 390 L470 510 L400 590 M300 80 L290 160 L250 200 M370 350 L375 400 M240 180 L270 340 L260 440 M560 20 L640 50 L740 60 L800 95 L900 110 L930 60 L910 20 M500 0 L480 40 L460 90 M760 180 L840 190 L920 220 L970 290 M790 200 L830 290 M800 350 L880 330 M870 190 L910 270 L930 330 M640 470 L690 600 M0 430 L90 520 L180 615 M1000 150 L1071 280 M1010 170 L1071 230 M80 300 L170 230",
    secondary: "M82 -10 L68 80 L55 180 L45 320 L25 410",
    primary: "M-20 405 L30 408 Q90 375 130 400 Q160 440 220 480 L320 565 L380 615 M25 420 L5 520 L-5 600",
    trunk: "M228 -10 L230 120 Q245 180 242 240 Q240 310 215 350 Q180 400 120 420 L60 445 Q20 480 15 540 L5 615",
    motorway: "M642 -10 L690 130 L725 250 Q740 290 785 345 Q820 410 825 480 L826 615",
    rail: "M150 -5 L145 80 L105 210 Q65 270 65 330 L80 420 L140 615 M-15 148 Q50 160 75 175 Q100 195 102 215",
    trees: [[287, 340], [293, 425], [447, 412], [535, 450], [369, 478]],
    peaks: [[832, 10]],
    labels: [
      { t: "Greenwich", x: 226, y: 110, kind: "place" },
      { t: "Pobrežje", x: 361, y: 200, kind: "place" },
      { t: "Malečnik", x: 794, y: 63, kind: "place" },
      { t: "Celestrin", x: 1071, y: 58, kind: "place", a: "end" },
      { t: "Zrkovci", x: 950, y: 307, kind: "place" },
      { t: "Brezje", x: 583, y: 402, kind: "place" },
      { t: "Tezno", x: 372, y: 557, kind: "place" },
      { t: "Stražun", x: 525, y: 533, kind: "wood" },
      { t: "Drava", x: 298, y: 57, kind: "water", r: -8 },
      { t: "Drava", x: 934, y: 142, kind: "water", r: 15 },
      { t: "Počivališče Maribor", x: 828, y: 506, kind: "exit" },
      { t: "Maribor - vzhod", x: 720, y: 229, kind: "exit" },
      { t: "4", x: 720, y: 260, kind: "exit" },
      { t: "Maribor - vzhod", x: 777, y: 335, kind: "exit" },
      { t: "4", x: 777, y: 366, kind: "exit" },
      { t: "Maribor - vzhod", x: 192, y: 371, kind: "exit" },
      { t: "4", x: 192, y: 402, kind: "exit" },
      { t: "Maribor Pobrežje", x: 240, y: 279, kind: "exit" },
      { t: "3", x: 240, y: 310, kind: "exit" },
      { t: "Ptujska cesta", x: 236, y: 518, kind: "road", r: 38 },
    ],
  },
];

type PathKey = Exclude<keyof Tile, "dx" | "dy" | "trees" | "peaks" | "labels">;

const fills: [PathKey, string][] = [
  ["farm", "#eef0d5"],
  ["town", "#dfdedd"],
  ["forest", "#add19e"],
  ["grass", "#cdebb0"],
  ["clearing", "#f2efe9"],
  ["orchard", "#aadb9f"],
  ["orchard", "url(#rows)"],
  ["scrub", "#c5cf9f"],
  ["townSlant", "url(#blocks)"],
  ["industry", "#e6d8e6"],
  ["retail", "#f5d6d0"],
  ["school", "#f6f3a8"],
  ["pitch", "#b4e6d0"],
];

const waters: [PathKey, string][] = [
  ["river", "#aad3df"],
  ["waterArea", "#aad3df"],
  ["island", "#add19e"],
];

const lines: [PathKey, string, number, string?][] = [
  ["contours", "#bd9a63", 2, "10 8"],
  ["waterLine", "#aad3df", 12],
  ["lanes", "#cfcdca", 4.5],
  ["lanes", "#ffffff", 3],
  ["streets", "#c2c0bd", 7.5],
  ["streets", "#ffffff", 5.5],
  ["secondary", "#b5b873", 12],
  ["secondary", "#f4f7b3", 10],
  ["primary", "#c99a55", 15],
  ["primary", "#fbd19b", 12],
  ["trunk", "#d98e78", 18],
  ["trunk", "#f5a98f", 16],
  ["motorway", "#cf7088", 24],
  ["motorway", "#e58da0", 21],
  ["rail", "#777777", 7],
  ["rail", "#cfcfcf", 2, "18 18"],
];

const labelStyles: Record<Label["kind"], string> = {
  place: "fill-[#333333] text-[31px]",
  city: "fill-[#333333] text-[37px]",
  peak: "fill-[#8a5a3c] text-[28px]",
  exit: "fill-[#b0202c] text-[25px] italic",
  water: "fill-[#5b9cc4] text-[28px] italic",
  wood: "fill-[#66785c] text-[30px] italic",
  road: "fill-[#4a4a35] text-[23px]",
};

function MapCanvas() {
  const at = (tile: Tile) => `translate(${tile.dx} ${tile.dy})`;
  return (
    <svg viewBox="0 0 2142 1152" preserveAspectRatio="xMidYMid slice" className="block h-full w-full" role="img" aria-label="Map of Maribor">
      <defs>
        <pattern id="blocks" width="36" height="25" patternUnits="userSpaceOnUse" patternTransform="rotate(14)">
          <path d="M0 0 H36 M0 0 V25" stroke="#ffffff" strokeWidth="4" fill="none" />
        </pattern>
        <pattern id="rows" width="20" height="24" patternUnits="userSpaceOnUse">
          <path d="M5 3 V11 M15 14 V22" stroke="#8ac480" strokeWidth="2.5" />
        </pattern>
      </defs>
      <rect width="2142" height="1152" fill="#f2efe9" />
      {fills.map(([key, color], i) =>
        tiles.map((tile, j) => tile[key] && <path key={`${i}-${j}`} d={tile[key]} fill={color} stroke={color.startsWith("url") ? "none" : color} strokeWidth="7" strokeLinejoin="round" strokeDasharray={key === "forest" ? "9 5" : undefined} transform={at(tile)} />),
      )}
      {waters.map(([key, color]) =>
        tiles.map((tile, j) => tile[key] && <path key={`${key}-${j}`} d={tile[key]} fill={color} transform={at(tile)} />),
      )}
      {tiles.map((tile, j) =>
        tile.trees.map(([x, y], i) => (
          <path key={`${j}-${i}`} d="M-6 10 V-2 M-11 -2 A6 9 0 1 1 -1 -2 Z M7 12 V2 M2 2 A6 9 0 1 1 12 2 Z" transform={`translate(${x + tile.dx} ${y + tile.dy})`} fill="none" stroke="#93bb86" strokeWidth="2" />
        )),
      )}
      {lines.map(([key, color, width, dash], i) =>
        tiles.map((tile, j) => tile[key] && <path key={`${i}-${j}`} d={tile[key]} fill="none" stroke={color} strokeWidth={width} strokeDasharray={dash} strokeLinejoin="round" transform={at(tile)} />),
      )}
      {/* Canal embankment, freight yard and interchange loops */}
      <g fill="none" strokeLinecap="round" transform="translate(1071 543)">
        <path d="M497 30 Q555 88 630 118 Q720 132 770 152 Q795 165 808 184" stroke="#3f4646" strokeWidth="6" />
        <path d="M708 306 Q722 296 726 270 M738 272 Q748 298 768 298 Q795 292 801 318 M778 330 Q792 318 780 300" stroke="#e58da0" strokeWidth="9" />
        <path d="M92 450 L140 615 H72 Z" fill="#b9b8b8" />
        <path d="M90 450 L82 610 M92 450 L96 612 M94 455 L110 612 M95 455 L126 612" stroke="#8d8d8d" strokeWidth="3" />
        <path d="M510 150 L557 155 L548 210 L500 205Z" fill="#bdbbbb" />
        <rect x="73" y="412" width="16" height="18" fill="#6d83b5" />
      </g>
      <g fill="none" transform="translate(-39 -87)">
        <path d="M484 373 L479 410" stroke="#666" strokeWidth="10" />
        <path d="M1527 656 L1540 685 L1555 683" stroke="#4a5050" strokeWidth="9" />
        <path d="M735 318 q3 -20 20 -18 l18 6 q12 18 0 42 q-14 12 -26 0 q-14 -14 -12 -30Z" stroke="#8ed0b9" strokeWidth="3" />
        <path d="M940 700 L1000 740 M900 690 L980 730 M950 715 L1040 745" stroke="#8d8d8d" strokeWidth="4" />
        <rect x="366" y="607" width="11" height="11" fill="#7478b4" />
        <rect x="150" y="607" width="11" height="11" fill="#7478b4" />
        <rect x="785" y="660" width="11" height="11" fill="#7478b4" />
        <rect x="936" y="708" width="15" height="15" fill="#7478b4" />
        <rect x="400" y="1180" width="10" height="10" fill="#7478b4" />
        <rect x="465" y="1210" width="10" height="10" fill="#7478b4" />
        <path d="M405 1190 L383 1215 L362 1240" stroke="#333" strokeWidth="6" strokeDasharray="8 10" />
      </g>
      <g transform="translate(1071 -87)">
        <rect x="181" y="539" width="14" height="14" fill="#6d78b8" />
        <path d="M711 505 V478 M705 478 H717" stroke="#555" strokeWidth="4" />
      </g>
      {tiles.map((tile, j) =>
        tile.peaks.map(([x, y], i) => <path key={`${j}-${i}`} d="M-10 9 L0 -9 L10 9 Z" fill="#d08f55" transform={`translate(${x + tile.dx} ${y + tile.dy})`} />),
      )}
      <g className="font-['Noto_Sans',sans-serif]" stroke="#ffffff" strokeOpacity="0.6" strokeWidth="5" strokeLinejoin="round" paintOrder="stroke">
        {tiles.map((tile, j) =>
          tile.labels.map((label, i) => (
            <text key={`${j}-${i}`} textAnchor={label.a ?? "middle"} className={labelStyles[label.kind]} transform={`translate(${label.x + tile.dx} ${label.y + tile.dy}) rotate(${label.r ?? 0})`}>
              {label.t}
            </text>
          )),
        )}
      </g>
      {/* Measurement track */}
      <g transform="translate(-39 -87)" strokeWidth="11" strokeLinecap="round" fill="none">
        <path d="M800 517 L816 522" stroke="#2c8a1e" />
        <path d="M824 521 L852 526 M878 550 L900 561 M948 577 L958 580" stroke="#ff9c00" />
        <path d="M882 556 L890 559" stroke="#2c8a1e" />
      </g>
      {/* Marker with missing picture */}
      <g transform="translate(734 319)">
        <rect x="1" y="1" width="104" height="104" fill="none" stroke="#9b9b9b" strokeOpacity="0.6" strokeWidth="3" />
        <path d="M4 4 H34 L46 16 V45 H4 Z" fill="#c3d9f5" stroke="#a9a9a9" strokeWidth="3" />
        <path d="M34 4 V16 H46" fill="#ffffff" stroke="#a9a9a9" strokeWidth="3" />
        <path d="M5 44 V36 Q20 16 38 36 L30 44 Z" fill="#45a03b" />
        <path d="M10 18 q5 -8 10 0 z" fill="#ffffff" />
        <path d="M48 18 L28 46 H48 Z" fill="#ffffff" />
        <svg width="65" height="96">
          <text x="0" y="74" className="fill-[#222222] font-['Liberation_Sans',sans-serif] text-[32px]">Mark</text>
        </svg>
      </g>
    </svg>
  );
}

function Scrollbar() {
  return (
    <div aria-hidden="true" className="flex w-[18px] shrink-0 flex-col items-center justify-between bg-[#f1f1f1] pb-2">
      <div className="flex w-full flex-col items-center">
        <svg viewBox="0 0 18 18" className="h-[18px] w-[18px]">
          <path d="M5 13 L9 8.500 L13 13 Z" fill="#a3a3a3" />
        </svg>
        <div className="h-10 w-[15px] bg-[#c1c1c1]" />
      </div>
      <svg viewBox="0 0 8 5" className="h-[5px] w-2">
        <path d="M0 0 H8 L4 4.500 Z" fill="#505050" />
      </svg>
    </div>
  );
}

function ReadingCard({ reading }: { reading: Reading }) {
  return (
    <li className="grid h-[87px] shrink-0 rounded bg-[#505067] pt-[17px] pb-2">
      <div className="px-[17px] text-[11px] leading-[14px] font-bold tracking-widest text-[#778ba0] [grid-area:1/1]">
        <p>AVERAGE RATING: {reading.rating}</p>
        <p>LONGITUDE: {reading.longitude}</p>
        <p>LATITUDE: {reading.latitude}</p>
      </div>
      <div className="self-end justify-self-center pl-[18px] [grid-area:1/1]">{reading.vehicle === "car" ? <CarIcon /> : <BikeIcon />}</div>
    </li>
  );
}

export default function App() {
  return (
    <div className="min-h-screen bg-black pr-10 font-['Open_Sans','Noto_Sans',sans-serif]">
      <div className="min-h-screen bg-[#24232d] text-[#778ba0]">
        <nav className="flex h-[63px] items-start justify-between bg-[#0e0d12] px-[18px] pt-[17px] text-base leading-6 tracking-[3px]">
          <div className="flex gap-[27px] font-light">
            <a href="#home">HOME</a>
            <a href="#profile">PROFILE</a>
            <a href="#data" className="text-[#fffff0]">DATA</a>
          </div>
          <div className="flex gap-[25px]">
            <a href="#logout" className="font-light text-[#fffff0]">LOGOUT</a>
            <span className="font-bold">HELLO, NEWUSER3@MAIL.COM</span>
          </div>
        </nav>

        <main className="grid grid-cols-[711fr_749fr] items-start gap-14 pr-[74px] pl-[49px]">
          <section className="flex flex-col items-center pt-[25px]">
            <h2 className="text-base leading-6 font-semibold tracking-widest">CURRENT READINGS:</h2>
            <button type="button" className="mt-10 text-base leading-6 font-semibold tracking-widest">SWITCH TO MY MEASUREMENTS</button>
            <div className="mt-[15px] flex h-[566px] w-full">
              <ul className="flex min-w-0 flex-1 flex-col justify-between overflow-hidden pt-px pb-0.5">
                {readings.map((reading) => (
                  <ReadingCard key={reading.rating} reading={reading} />
                ))}
              </ul>
              <Scrollbar />
            </div>
          </section>

          <section className="mt-[39px] rounded bg-[#505067] pt-[17px] pr-[18px] pb-[15px] pl-[17px]">
            <div className="relative h-[385px] overflow-hidden">
              <MapCanvas />
              <div className="absolute top-2.5 left-2.5 flex w-[26px] flex-col divide-y divide-[#cccccc] overflow-hidden rounded-sm bg-white font-['Liberation_Sans',sans-serif] text-xl leading-[26px] font-bold text-black shadow-[0_1px_5px_rgba(0,0,0,0.65)]">
                <button type="button" aria-label="Zoom in" className="h-[27px]">+</button>
                <button type="button" aria-label="Zoom out" className="h-[27px]">−</button>
              </div>
              <div className="absolute right-0 bottom-0 flex items-center gap-1 bg-white/80 px-[5px] font-['Liberation_Sans',sans-serif] text-[10px] leading-[15px] text-[#333333]">
                <svg viewBox="0 0 12 8" className="h-2 w-[11px]">
                  <path fill="#4C7BE1" d="M0 0h12v4H0z" />
                  <path fill="#FFD500" d="M0 4h12v3H0z" />
                  <path fill="#E0BC00" d="M0 7h12v1H0z" />
                </svg>
                <span>
                  <a href="#leaflet" className="text-[#0078a8]">Leaflet</a> | © <a href="#openstreetmap" className="text-[#0078a8]">OpenStreetMap</a> contributors
                </span>
              </div>
            </div>
            <p className="mt-[25px] text-base leading-6 font-semibold tracking-widest">CURRENT LOCATION: MARIBOR, SLOVENIA</p>
          </section>
        </main>
      </div>
    </div>
  );
}
